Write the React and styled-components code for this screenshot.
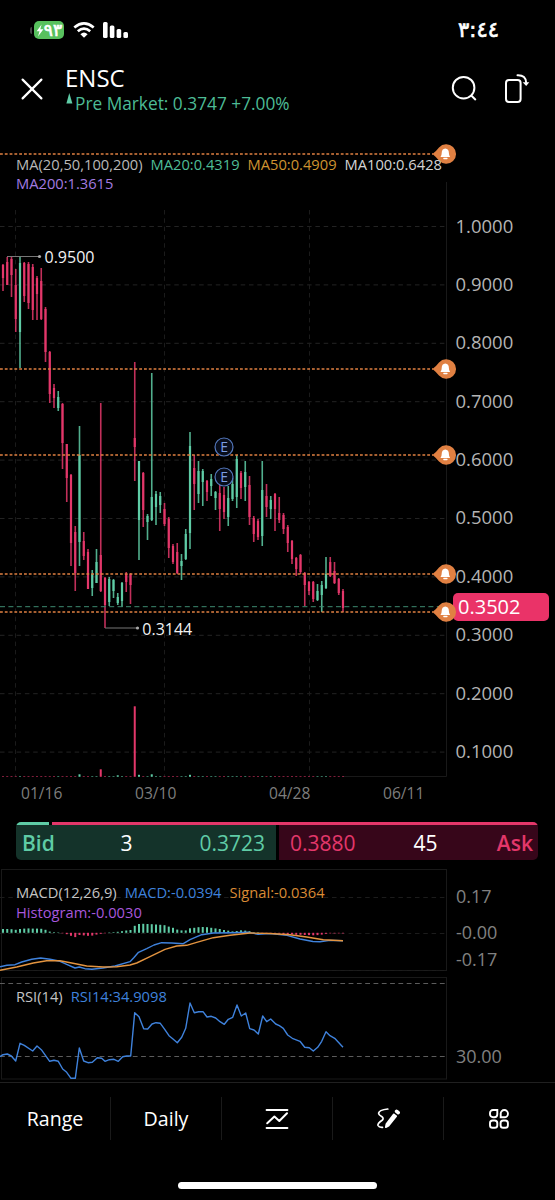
import React from 'react'
import styled, {createGlobalStyle} from 'styled-components'

const GlobalStyle = createGlobalStyle`
    *{
        box-sizing: border-box;
    }
    body{
        margin: 0;
        background: #000;
        font-family: "Open Sans", "Noto Sans", sans-serif;
        color: #fff;
    }
`

const GREEN = '#5fcca6'
const RED = '#e3376a'
const ORANGE = '#e08042'
const BLUE = '#3f82dc'

const Screen = styled.div`
    width: 555px;
    height: 1200px;
    overflow: hidden;
    display: flex;
    flex-direction: column;
    background: #000;
`
const StatusBar = styled.div`
    display: flex;
    align-items: center;
    height: 60px;
    padding: 0 56px 0 30px;
    font-family: "DejaVu Sans", sans-serif;
`
const Battery = styled.div`
    display: flex;
    align-items: center;
    gap: 2px;
    margin-right: 9px;
    &::before{
        content: '';
        width: 2px;
        height: 7px;
        border-radius: 2px 0 0 2px;
        background: #444;
    }
`
const Charge = styled.div`
    display: flex;
    align-items: center;
    justify-content: center;
    width: 30px;
    height: 18px;
    border-radius: 5px;
    background: #58c15e;
    font-size: 17px;
    line-height: 18px;
    -webkit-text-stroke: 0.7px #fff;
`
const Clock = styled.div`
    margin-left: auto;
    font-size: 21px;
    line-height: 24px;
    -webkit-text-stroke: 0.7px #fff;
`
const Header = styled.header`
    display: flex;
    align-items: flex-start;
    height: 80px;
    padding: 4px 25px 0 21px;
    & > .close{
        margin: 14px 22px 0 0;
    }
    & > .search{
        margin: 11px 27px 0 auto;
    }
    & > .rotate{
        margin-top: 9px;
    }
`
const Symbol = styled.h1`
    margin: 0;
    font-size: 24px;
    line-height: 28px;
    font-weight: 500;
`
const PreMarket = styled.div`
    display: flex;
    gap: 2px;
    font-size: 17.3px;
    line-height: 23px;
    color: #4dbb95;
    white-space: nowrap;
    & > svg{
        margin-top: 1px;
    }
`
const ChartRow = styled.section`
    display: grid;
    grid-template-columns: 447px 1fr;
    height: ${({ $height }) => $height}px;
    margin-bottom: ${({ $gap }) => $gap || 0}px;
`
const Plot = styled.div`
    position: relative;
    z-index: 1;
    & > svg{
        display: block;
        overflow: visible;
    }
`
const Legend = styled.div`
    position: absolute;
    top: ${({ $top }) => $top}px;
    left: 16px;
    display: flex;
    flex-wrap: wrap;
    column-gap: 8px;
    width: 436px;
    font-size: 14.7px;
    line-height: 19.8px;
    white-space: nowrap;
`
const LegendItem = styled.span`
    color: ${({ $color }) => $color};
`
const PriceAxis = styled.div`
    position: relative;
    display: flex;
    flex-direction: column;
    padding: 56.5px 0 0 8.5px;
    font-size: 18.5px;
    color: #b4b4b4;
    & > span{
        height: 58.4px;
        line-height: 58.4px;
    }
`
const PriceTag = styled.div`
    position: absolute;
    top: 453px;
    left: 6px;
    width: 96px;
    height: 28px;
    padding-left: 5px;
    border-radius: 5px;
    background: #ea3368;
    color: #fff;
    font-size: 20px;
    line-height: 28px;
`
const TimeAxis = styled.div`
    display: grid;
    grid-template-columns: 114px 134px 114px 42px;
    height: 42px;
    margin-left: 21px;
    padding-top: 2px;
    font-size: 15.6px;
    line-height: 23px;
    color: #7d7d7d;
`
const Quote = styled.section`
    margin: 0 17px 9px 16px;
    height: 38px;
    border-radius: 5px;
    overflow: hidden;
`
const Ratio = styled.div`
    display: flex;
    gap: 3px;
    height: 3px;
    & > i{
        flex: 1;
        background: ${RED};
    }
    & > i:first-child{
        flex: 0 0 33px;
        background: ${GREEN};
    }
`
const Sides = styled.div`
    display: grid;
    grid-template-columns: 260px 259px;
    gap: 3px;
    height: 35px;
`
const Side = styled.div`
    display: grid;
    grid-template-columns: ${({ $ask }) => $ask ? '106px 59px 1fr' : '73px 63px 1fr'};
    align-items: center;
    padding: 0 ${({ $ask }) => $ask ? '5px 0 11px' : '11px 0 6px'};
    background: ${({ $ask }) => $ask ? '#37061a' : '#14332a'};
    color: ${({ $ask }) => $ask ? RED : GREEN};
    font-size: 21px;
    line-height: 34px;
    & > b{
        font-weight: 600;
    }
    & > em{
        font-style: normal;
        color: #fff;
        text-align: center;
    }
    & > :last-child{
        text-align: right;
    }
`
const Scale = styled.div`
    padding: ${({ $top }) => $top}px 0 0 9px;
    font-size: 18px;
    line-height: 26px;
    color: #808080;
    & > span{
        display: block;
    }
    & > span + span{
        margin-top: 10px;
    }
    & > span + span + span{
        margin-top: 1px;
    }
`
const Toolbar = styled.nav`
    display: grid;
    grid-template-columns: repeat(5, 1fr);
    border-top: 1px solid #202020;
    height: 100px;
    padding-top: 14px;
`
const Tool = styled.button`
    display: flex;
    align-items: center;
    justify-content: center;
    height: 43px;
    padding: 0;
    border: none;
    border-right: 1px solid #1a1a1a;
    background: none;
    color: #fff;
    font-family: inherit;
    font-size: 19.6px;
    font-weight: 500;
    &:last-child{
        padding-right: 2px;
        border-right: none;
    }
`
const HomeIndicator = styled.div`
    width: 199px;
    height: 7px;
    margin: 0 auto;
    border-radius: 4px;
    background: #fff;
`

const STEP = 4.25
const candleX = (i) => 3 + i * STEP

// direction, high, low, body top, body bottom (chart pixels)
const candles = [
    ['r', 264, 291, 265, 278], ['r', 257, 285, 262, 285], ['r', 257, 297, 259, 275], ['r', 269, 332, 285, 319],
    ['g', 257, 368, 263, 332], ['r', 262, 302, 263, 296], ['r', 262, 309, 264, 303], ['r', 264, 320, 267, 310],
    ['r', 276, 320, 278, 294], ['r', 268, 320, 281, 319], ['r', 307, 362, 309, 352], ['r', 351, 403, 352, 394],
    ['r', 384, 408, 388, 398], ['g', 391, 411, 397, 408], ['r', 403, 469, 404, 443], ['r', 444, 502, 444, 478],
    ['r', 474, 566, 475, 543], ['r', 526, 591, 532, 573], ['g', 426, 566, 455, 542], ['r', 532, 560, 541, 556],
    ['r', 549, 589, 552, 589], ['g', 570, 596, 574, 588], ['g', 549, 583, 562, 583], ['r', 403, 592, 555, 591],
    ['r', 577, 628, 578, 605], ['g', 577, 606, 579, 602], ['g', 579, 598, 580, 591], ['g', 593, 605, 597, 603],
    ['g', 582, 607, 583, 601], ['r', 572, 592, 574, 582], ['r', 573, 604, 574, 585], ['r', 362, 481, 438, 447],
    ['g', 461, 560, 461, 520], ['r', 472, 527, 473, 510], ['g', 514, 540, 516, 522], ['g', 373, 521, 497, 520],
    ['g', 491, 525, 494, 507], ['g', 492, 513, 496, 505], ['r', 503, 526, 509, 524], ['r', 517, 558, 519, 548],
    ['r', 544, 564, 546, 562], ['r', 543, 574, 552, 573], ['g', 554, 580, 561, 566], ['g', 529, 560, 534, 559],
    ['g', 432, 549, 446, 533], ['r', 455, 510, 468, 484], ['g', 461, 503, 471, 494], ['g', 469, 506, 471, 482],
    ['r', 480, 501, 481, 492], ['g', 474, 496, 479, 486], ['g', 491, 510, 492, 498], ['r', 483, 531, 493, 509],
    ['r', 487, 519, 495, 512], ['g', 486, 526, 498, 517], ['g', 478, 501, 484, 499], ['g', 455, 508, 459, 497],
    ['r', 471, 499, 473, 488], ['g', 461, 501, 472, 487], ['r', 476, 525, 485, 517], ['r', 516, 542, 518, 534],
    ['r', 519, 540, 521, 537], ['g', 461, 546, 490, 536], ['r', 484, 517, 496, 507], ['g', 496, 519, 500, 509],
    ['r', 493, 531, 494, 509], ['r', 497, 523, 513, 520], ['r', 513, 534, 515, 529], ['r', 525, 552, 527, 543],
    ['r', 540, 564, 541, 559], ['r', 557, 576, 558, 569], ['r', 554, 574, 555, 572], ['r', 572, 606, 573, 585],
    ['r', 581, 595, 582, 591], ['r', 581, 602, 582, 599], ['g', 584, 601, 591, 600], ['g', 581, 612, 585, 595],
    ['g', 557, 589, 574, 588], ['r', 557, 577, 562, 576], ['r', 562, 584, 571, 583], ['r', 578, 595, 579, 593],
    ['r', 589, 612, 591, 608],
]
const bigVolumes = { 18: 2.5, 23: 7.5, 27: 1.5, 31: 70.5, 32: 2, 35: 2.5, 44: 2 }

const alerts = [154, 369, 455, 574, 612]
const prices = ['1.0000', '0.9000', '0.8000', '0.7000', '0.6000', '0.5000', '0.4000', '0.3000', '0.2000', '0.1000']

const histogram = [
    3.8, 3.8, 3.6, 3, 3.8, 4.2, 4.4, 4.2, 4.2, 4, 3, 1.2, .6, .4, -.5, -1.4, -3, -4.3, -2.2, -2.6, -3, -2.8, -1.8, -1,
    -.5, .4, .6, 1, 1.6, 2.3, 2.8, 7, 8.8, 9, 8.8, 8.6, 8.3, 8, 7.6, 6.2, 5, 3.2, 2.4, 2.4, 4.5, 5, 5.6, 5.8, 5.6, 5,
    4.4, 3.8, 2.8, 2.2, 1.4, 1.8, 2.5, 2.2, 1.6, .5, .4, -.4, -.5, -.4, -.6, -.9, -1.2, -1.3, -1.6, -2, -2, -2.2, -2.3,
    -2.5, -2.3, -1.8, -1, -.6, -.6, -.6, -.6,
]
const macdLine = '0,966.7 7,965.3 15,964.7 21.7,962 31.7,959.3 40.7,958 50,959.3 60,961.3 66.7,964.3 75,968 79.3,967 85,968.7 92,969.3 103,968 115,966 130,961.7 134,957.5 138.5,952.3 146.7,948.7 154,945 161.7,942.7 171.7,943 183.3,943.7 190,939.7 201.7,934.7 213.3,933 233,932.7 248,932.3 258,934.3 270,933.6 287,935.3 300,939 313,941.5 320,941.7 330,940.4 343,940.7'
const signalLine = '0,970.3 16.7,967 33.3,963 46.7,960.7 60,960.7 71.7,963 86.7,966 103,967 116.7,966.7 130,965 136.7,963 150,956.7 165,949.3 176.7,946 186.7,945.3 196.7,942.3 213.3,937.7 230,935.3 250,933 270,933.5 290,934.7 306.7,937 323.3,939.7 343,940.7'
const rsiLine = '0,1056.7 3,1054.7 7.3,1054 11.3,1056 15.7,1061 20,1043.3 24.3,1045.3 32.7,1051 37,1046 41.3,1049.7 49.7,1061.3 54,1060.3 58.3,1061.3 62.7,1069 66.7,1072.3 71,1078.3 75.3,1078.3 79.3,1048 83.7,1061 88,1062.7 92.3,1062.3 97.3,1057.7 101.7,1058.3 105,1061.3 109.3,1059.7 114,1059.3 118.3,1061.3 122.7,1056.7 126.7,1056 130.7,1056 134.7,1012.7 139,1016.7 143.7,1028.7 147.7,1029 152,1024 156,1022.7 160.3,1023.3 164.7,1029.3 169,1035.7 173,1039 177.3,1042.7 181.7,1037.3 185.7,1028.3 190,1003 194.3,1012.7 198.7,1011.7 203,1011.7 207,1017 211.3,1016.3 215.7,1018 220,1021.7 224.3,1024.3 228.3,1019.3 232.7,1017.3 237,1005 241.3,1016 245.7,1013 249.7,1028.7 254,1030 258.3,1034 262.7,1016 266.7,1021.7 270.7,1019 275.7,1024 279.3,1025.7 283.3,1028.3 287.7,1035 292.3,1038.3 300,1041.3 304.7,1047.3 309.3,1047.7 313.3,1051 317.7,1047.3 321.7,1041.3 326,1031.7 330,1035.7 334.7,1038.3 343,1047.3'

function AlertPin({ y }) {
    return (
        <g transform={`translate(446 ${y})`}>
            <path d="M-13.5 0Q-9.5 -3.3 -7 -6.6A9.8 9.8 0 1 1 -7 6.6Q-9.5 3.3 -13.5 0Z" fill={ORANGE}/>
            <path d="M-5.5 2.9Q-4.3 1.9 -4.3 -1Q-4.3 -5.2 -.7 -5.5Q2.9 -5.2 2.9 -1Q2.9 1.9 4.1 2.9Z" fill="#fff"/>
            <rect x="-2.8" y="3.8" width="4.4" height="1.5" rx=".7" fill="#fff"/>
        </g>
    )
}

function EarningsMark({ y }) {
    return (
        <g>
            <circle cx="224" cy={y} r="9" fill="#080d1a" stroke="#5478bd" strokeWidth="1.2"/>
            <text x="224.2" y={y + 5} textAnchor="middle" fontSize="14" fontWeight="500" fill="#7a9de2">E</text>
        </g>
    )
}

function PriceChart() {
    return (
        <svg width="447" height="640" viewBox="0 140 447 640">
            <g stroke="#232323" strokeDasharray="4.5 3.8">
                {prices.map((price, i) => <line key={price} x1="0" x2="446" y1={226.5 + i * 58.4} y2={226.5 + i * 58.4}/>)}
                {[15.5, 164.5, 309.5].map(x => <line key={x} x1={x} x2={x} y1="210" y2="776" stroke="#1b1b1b"/>)}
            </g>
            <path d="M446.5 182V776.5H343" fill="none" stroke="#191919"/>
            {candles.map(([dir, high, low, top, bottom], i) => {
                const color = dir === 'g' ? GREEN : RED
                const volume = bigVolumes[i]
                return (
                    <g key={i} fill={color}>
                        <rect x={candleX(i) - .8} y={high} width="1.6" height={low - high} opacity=".85"/>
                        <rect x={candleX(i) - 1.1} y={top} width="2.2" height={bottom - top}/>
                        <rect x={candleX(i) - 1} y={776.8 - (volume || .7)} width="2" height={volume || .7} opacity={volume ? 1 : .8}/>
                    </g>
                )
            })}
            <line x1="0" x2="446" y1="606.7" y2="606.7" stroke="#3e8a71" strokeDasharray="5 3.4"/>
            {alerts.map(y => <line key={y} x1="0" x2="433" y1={y} y2={y} stroke={ORANGE} strokeWidth="1.4" strokeDasharray="2.8 2"/>)}
            <g stroke="#777" fill="#aaa">
                <path d="M7 256.5H39M105 628H137" fill="none"/>
                <circle cx="39.5" cy="256.5" r="1.6" stroke="none"/>
                <circle cx="137.5" cy="628" r="1.6" stroke="none"/>
            </g>
            <g fontSize="16" fill="#f2f2f2">
                <text x="44.5" y="263">0.9500</text>
                <text x="142.3" y="634.5">0.3144</text>
            </g>
            <EarningsMark y={447}/>
            <EarningsMark y={477}/>
            {alerts.map(y => <AlertPin key={y} y={y}/>)}
        </svg>
    )
}

function MacdChart() {
    return (
        <svg width="447" height="102" viewBox="0 869 447 102" fill="none">
            <rect x="1.5" y="869.5" width="445" height="101" stroke="#191919"/>
            <path d="M0 897.5H446M0 933.5H446M0 970.5H446" stroke="#1c1c1c" strokeDasharray="4.5 3.8"/>
            {histogram.map((value, i) => (
                <rect
                    key={i}
                    x={candleX(i) - 1}
                    y={value > 0 ? 932.8 - value : 932.8}
                    width="2"
                    height={Math.abs(value)}
                    fill={value > 0 ? GREEN : RED}/>
            ))}
            <polyline points={macdLine} stroke={BLUE} strokeWidth="1.4" strokeLinejoin="round"/>
            <polyline points={signalLine} stroke="#e39440" strokeWidth="1.4" strokeLinejoin="round"/>
        </svg>
    )
}

function RsiChart() {
    return (
        <svg width="447" height="104" viewBox="0 977 447 104" fill="none">
            <rect x="1.5" y="977.5" width="445" height="101.5" stroke="#191919"/>
            <path d="M0 983.5H446M0 1056.5H446" stroke="#5c5c5c" strokeDasharray="4.8 3.5"/>
            <polyline points={rsiLine} stroke={BLUE} strokeWidth="1.4" strokeLinejoin="round"/>
        </svg>
    )
}

function App() {
    return (
        <Screen>
            <GlobalStyle/>
            <StatusBar>
                <Battery>
                    <Charge>
                        <svg width="8" height="13" viewBox="0 0 8 13"><path d="M5.6 .5L.6 7.3H3.5L2 12.5L7.4 5.3H4.3Z" fill="#fff"/></svg>
                        ٩٣
                    </Charge>
                </Battery>
                <svg width="22" height="16" viewBox="0 0 22 16" fill="none" stroke="#fff" strokeWidth="2.7">
                    <path d="M1.3 5.5Q11 -2.6 20.7 5.5M4.8 9.3Q11 4.1 17.2 9.3"/>
                    <path d="M7.4 12.2Q11 9 14.6 12.2L11 15.8Z" fill="#fff" stroke="none"/>
                </svg>
                <svg width="33" height="16" viewBox="-8 0 33 16" fill="#fff">
                    <rect x="0" y="0" width="4.6" height="16" rx="1.5"/>
                    <rect x="6.8" y="3.5" width="4.6" height="12.5" rx="1.5"/>
                    <rect x="13.6" y="7" width="4.6" height="9" rx="1.5"/>
                    <rect x="20.4" y="10" width="4.6" height="6" rx="1.5"/>
                </svg>
                <Clock>٣:٤٤</Clock>
            </StatusBar>
            <Header>
                <svg className="close" width="22" height="22" viewBox="0 0 22 22" stroke="#fff" strokeWidth="2.2" strokeLinecap="round">
                    <path d="M1.6 1.6L20.4 20.4M20.4 1.6L1.6 20.4"/>
                </svg>
                <div>
                    <Symbol>ENSC</Symbol>
                    <PreMarket>
                        <svg width="8" height="12" viewBox="0 0 8 12"><path d="M4.3 0L7.4 10.5H1.4Z" fill={GREEN}/></svg>
                        Pre Market: 0.3747 +7.00%
                    </PreMarket>
                </div>
                <svg className="search" width="26" height="26" viewBox="0 0 26 26" fill="none" stroke="#fff" strokeWidth="2" strokeLinecap="round">
                    <circle cx="12.6" cy="12.7" r="10.8"/>
                    <path d="M20.5 20.8L24.3 24.4"/>
                </svg>
                <svg className="rotate" width="26" height="31" viewBox="0 0 26 31" fill="none" stroke="#fff" strokeWidth="2" strokeLinecap="round">
                    <rect x="2" y="7" width="14.6" height="22" rx="3"/>
                    <path d="M13.5 2.3Q22 2 22.2 10"/>
                    <path d="M18.7 9.3H25.3L22.2 13Z" fill="#fff" stroke="none"/>
                </svg>
            </Header>
            <ChartRow $height={640}>
                <Plot>
                    <PriceChart/>
                    <Legend $top={14.5}>
                        <LegendItem $color="#b9b9b9">MA(20,50,100,200)</LegendItem>
                        <LegendItem $color="#4fbd97">MA20:0.4319</LegendItem>
                        <LegendItem $color="#cf9330">MA50:0.4909</LegendItem>
                        <LegendItem $color="#d4d4d4">MA100:0.6428</LegendItem>
                        <LegendItem $color="#a37be0">MA200:1.3615</LegendItem>
                    </Legend>
                </Plot>
                <PriceAxis>
                    {prices.map(price => <span key={price}>{price}</span>)}
                    <PriceTag>0.3502</PriceTag>
                </PriceAxis>
            </ChartRow>
            <TimeAxis>
                <span>01/16</span>
                <span>03/10</span>
                <span>04/28</span>
                <span>06/11</span>
            </TimeAxis>
            <Quote>
                <Ratio><i/><i/></Ratio>
                <Sides>
                    <Side>
                        <b>Bid</b>
                        <em>3</em>
                        <span>0.3723</span>
                    </Side>
                    <Side $ask>
                        <span>0.3880</span>
                        <em>45</em>
                        <b>Ask</b>
                    </Side>
                </Sides>
            </Quote>
            <ChartRow $height={102} $gap={6}>
                <Plot>
                    <MacdChart/>
                    <Legend $top={14}>
                        <LegendItem $color="#c4c4c4">MACD(12,26,9)</LegendItem>
                        <LegendItem $color={BLUE}>MACD:-0.0394</LegendItem>
                        <LegendItem $color="#d98a35">Signal:-0.0364</LegendItem>
                        <LegendItem $color="#a757dc">Histogram:-0.0030</LegendItem>
                    </Legend>
                </Plot>
                <Scale $top={14}>
                    <span>0.17</span>
                    <span>-0.00</span>
                    <span>-0.17</span>
                </Scale>
            </ChartRow>
            <ChartRow $height={105}>
                <Plot>
                    <RsiChart/>
                    <Legend $top={10}>
                        <LegendItem $color="#c4c4c4">RSI(14)</LegendItem>
                        <LegendItem $color={BLUE}>RSI14:34.9098</LegendItem>
                    </Legend>
                </Plot>
                <Scale $top={66}>
                    <span>30.00</span>
                </Scale>
            </ChartRow>
            <Toolbar>
                <Tool>Range</Tool>
                <Tool>Daily</Tool>
                <Tool>
                    <svg width="24" height="24" viewBox="0 0 24 24" fill="none" stroke="#fff" strokeWidth="2" strokeLinecap="round" strokeLinejoin="round">
                        <path d="M1.6 3H22.4M1.6 21H22.4M2.2 16.2L9.4 9.6L14.3 14L22 6.2"/>
                    </svg>
                </Tool>
                <Tool>
                    <svg width="24" height="24" viewBox="0 0 24 24" fill="none" stroke="#fff" strokeWidth="1.7" strokeLinecap="round" strokeLinejoin="round">
                        <path d="M11.8 2Q3 3 2.6 6.2Q2.6 8 5.6 9.6Q8 11 6.5 13Q1.2 16.5 2 18.5Q3 20.6 6.5 20.4"/>
                        <path d="M9.8 20.2L10.4 17L17.8 7.3L20.2 9.2L12.6 18.8Z" fill="#fff"/>
                        <path d="M20.6 4.3L22.2 5.6" strokeWidth="3.6"/>
                    </svg>
                </Tool>
                <Tool>
                    <svg width="22" height="22" viewBox="0 0 22 22" fill="none" stroke="#fff" strokeWidth="1.9">
                        <path d="M5 2H9.3V6.3A3 3 0 0 1 6.3 9.3H5A3 3 0 0 1 2 6.3V5A3 3 0 0 1 5 2Z"/>
                        <path d="M12.7 9.3V5.6A3.6 3.6 0 0 1 16.3 2A3.6 3.6 0 0 1 16.3 9.3Z"/>
                        <rect x="2" y="12.5" width="7.3" height="7.3" rx="2.6"/>
                        <rect x="12.6" y="12.5" width="7.3" height="7.3" rx="2.6"/>
                    </svg>
                </Tool>
            </Toolbar>
            <HomeIndicator/>
        </Screen>
    )
}

export default App
